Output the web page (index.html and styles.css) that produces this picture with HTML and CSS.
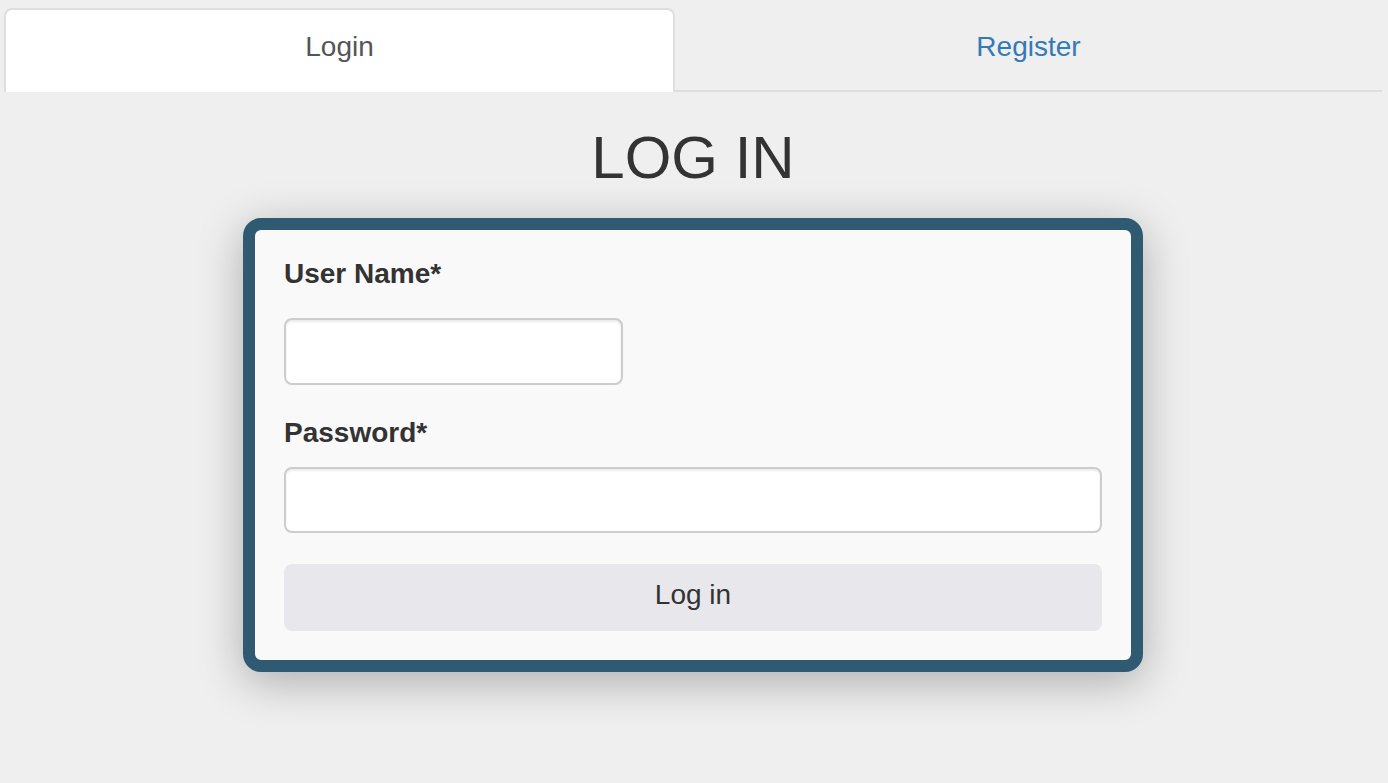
FILE: index.html
```html
<!DOCTYPE html>
<html lang="en">
<head>
<meta charset="utf-8">
<title>Log in</title>
<link rel="stylesheet" href="styles.css">
</head>
<body>
<div class="page">
  <nav class="tabs">
    <a class="tab tab-active" href="#">Login</a>
    <a class="tab tab-link" href="#">Register</a>
  </nav>
  <h1 class="title">LOG IN</h1>
  <form class="card">
    <div class="card-inner">
      <label class="field-label label-user" for="user">User Name*</label>
      <input class="field field-short" id="user" type="text">
      <label class="field-label label-pass" for="pass">Password*</label>
      <input class="field field-wide" id="pass" type="password">
      <button class="submit" type="button">Log in</button>
    </div>
  </form>
</div>
</body>
</html>
```
FILE: styles.css
```css
* { box-sizing: border-box; }
html {
  background: #efefef;
}
body {
  margin: 0;
  font-family: "Liberation Sans", Arial, sans-serif;
  color: #333;
}
.page {
  padding: 8px 6px 100px 4px;
}
.tabs {
  display: flex;
}
.tab {
  display: block;
  height: 84px;
  font-size: 28px;
  line-height: 40px;
  text-align: center;
  text-decoration: none;
}
.tab-active {
  width: 671px;
  background: #fff;
  color: #555;
  border: 2px solid #dedede;
  border-bottom: none;
  border-radius: 8px 8px 0 0;
  padding-top: 17px;
}
.tab-link {
  flex: 1;
  color: #337ab7;
  border-bottom: 2px solid #dedede;
  padding-top: 19px;
}
.title {
  margin: 33px 0 27px;
  font-size: 60px;
  line-height: 66px;
  font-weight: normal;
  text-align: center;
  color: #333;
}
.card {
  display: block;
  width: 900px;
  margin: 0 auto;
  border: 12px solid #2f5a72;
  border-radius: 18px;
  background: #f9f9f9;
  box-shadow: 0 10px 45px rgba(0, 0, 0, 0.28);
}
.card-inner {
  display: flex;
  flex-direction: column;
  align-items: flex-start;
  padding: 24px 29px 29px;
}
.field-label {
  display: block;
  font-size: 28px;
  line-height: 40px;
  font-weight: bold;
  color: #333;
}
.label-user { margin-bottom: 24px; }
.label-pass { margin-top: 28px; margin-bottom: 14px; }
.field {
  display: block;
  height: 67px;
  background: #fff;
  border: 2px solid #cccccc;
  border-radius: 8px;
  box-shadow: inset 0 2px 2px rgba(0, 0, 0, 0.075);
  font-size: 28px;
  font-family: inherit;
  padding: 0 20px;
}
.field-short { width: 339px; }
.field-wide { width: 100%; height: 66px; }
.submit {
  display: block;
  width: 100%;
  margin-top: 31px;
  height: 67px;
  padding: 11px 0 16px;
  border: none;
  border-radius: 8px;
  background: #e8e8ec;
  color: #333;
  font-family: inherit;
  font-size: 28px;
  line-height: 40px;
  text-align: center;
}
```
